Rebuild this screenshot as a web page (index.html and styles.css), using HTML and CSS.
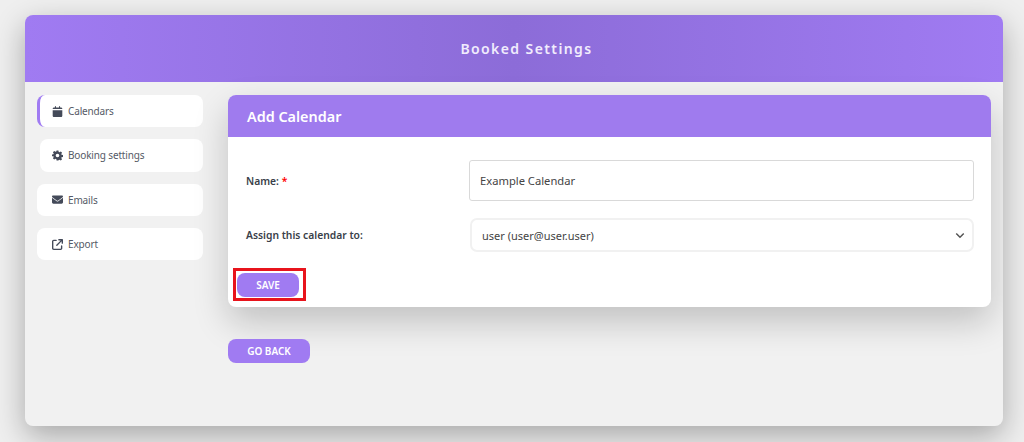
FILE: index.html
```html
<!DOCTYPE html>
<html lang="en">
<head>
<meta charset="UTF-8">
<title>Booked Settings</title>
<link rel="stylesheet" href="styles.css">
</head>
<body>

<div class="window">
  <div class="top-bar">Booked Settings</div>
  <div class="panel">
    <div class="side-nav">
      <a class="nav-item active">
        <svg class="nav-icon" viewBox="0 0 448 512"><path d="M152 24c0-13-11-24-24-24s-24 11-24 24v40H64C29 64 0 93 0 128v16h448v-16c0-35-29-64-64-64h-40V24c0-13-11-24-24-24s-24 11-24 24v40H152V24zM448 192H0v256c0 35 29 64 64 64h320c35 0 64-29 64-64V192z"/></svg>
        Calendars
      </a>
      <a class="nav-item inset">
        <svg class="nav-icon" viewBox="0 0 24 24"><path fill-rule="evenodd" d="M10 1h4l.7 3.200 1.700.7 2.800-1.800 2.800 2.800-1.800 2.800.7 1.700 3.100.6v4l-3.100.7-.7 1.700 1.800 2.800-2.800 2.800-2.800-1.800-1.700.7L14 23h-4l-.7-3.200-1.700-.7-2.800 1.800L2 18.100l1.800-2.800-.7-1.700L0 13.900v-4l3.100-.6.7-1.700L2 4.900l2.800-2.800 2.800 1.800 1.700-.7L10 1zm2 7a4 4 0 1 0 0 8 4 4 0 0 0 0-8z"/></svg>
        Booking settings
      </a>
      <a class="nav-item">
        <svg class="nav-icon" viewBox="0 0 512 512"><path d="M48 64C22 64 0 86 0 112c0 15 7 29 19 38l218 163c11 9 27 9 38 0l218-163c12-9 19-23 19-38 0-26-22-48-48-48H48zM0 176v208c0 35 29 64 64 64h384c35 0 64-29 64-64V176L294 339c-23 17-53 17-76 0L0 176z"/></svg>
        Emails
      </a>
      <a class="nav-item">
        <svg class="nav-icon" viewBox="0 0 512 512"><path d="M320 0c-18 0-32 14-32 32s14 32 32 32h83L201 265c-12 13-12 33 0 46s33 12 46 0L448 109v83c0 18 14 32 32 32s32-14 32-32V32c0-18-14-32-32-32H320zM80 32C36 32 0 68 0 112v320c0 44 36 80 80 80h320c44 0 80-36 80-80V320c0-18-14-32-32-32s-32 14-32 32v112c0 9-7 16-16 16H80c-9 0-16-7-16-16V112c0-9 7-16 16-16h112c18 0 32-14 32-32s-14-32-32-32H80z"/></svg>
        Export
      </a>
    </div>

    <div class="content">
      <div class="card">
        <div class="card-head">Add Calendar</div>
        <div class="card-body">
          <div class="form-row name-row">
            <label class="form-label">Name: <span class="required">*</span></label>
            <div class="text-input">Example Calendar</div>
          </div>
          <div class="form-row assign-row">
            <label class="form-label">Assign this calendar to:</label>
            <div class="select-input">
              user (user@user.user)
              <svg class="chevron" viewBox="0 0 12 8"><path d="M1.500 1.500 6 6l4.500-4.500"/></svg>
            </div>
          </div>
          <div class="save-box">
            <button class="btn">SAVE</button>
          </div>
        </div>
      </div>
      <button class="btn back-btn">GO BACK</button>
    </div>
  </div>
</div>

</body>
</html>
```

FILE: styles.css
```css
* {
  box-sizing: border-box;
  font-family: "Noto Sans", sans-serif;
}
html, body {
  height: 100%;
}
body {
  margin: 0;
  padding: 15px 21px 16px 25px;
  background: #efefef;
  overflow: hidden;
}

.window {
  height: 411px;
  border-radius: 8px;
  background: #f1f1f1;
  box-shadow: 0 10px 30px rgba(0,0,0,0.3);
  overflow: hidden;
}
.top-bar {
  height: 67px;
  padding-left: 25px;
  display: flex;
  justify-content: center;
  align-items: center;
  font-size: 14px;
  font-weight: 600;
  letter-spacing: 1.400px;
  color: #f1ecfd;
  background: linear-gradient(90deg, #a07bf2 0%, #8c6cd8 50%, #a07bf2 100%);
}

.panel {
  display: flex;
  padding: 13px 12px 0;
}
.side-nav {
  width: 166px;
  margin-right: 25px;
  flex-shrink: 0;
  display: flex;
  flex-direction: column;
  gap: 12px;
}
.nav-item {
  height: 32.300px;
  display: flex;
  align-items: center;
  padding-left: 15px;
  background: white;
  border-radius: 8px;
  font-size: 10px;
  letter-spacing: -0.150px;
  color: #555a66;
}
.nav-item.active {
  border-left: 3px solid #a07bf2;
  padding-left: 12px;
}
.nav-item.inset {
  margin-left: 3px;
  padding-left: 12px;
}
.nav-icon {
  width: 11px;
  height: 11px;
  margin-right: 5px;
  fill: #444a59;
}

.content {
  flex: 1;
}
.card {
  width: 763px;
  height: 212px;
  background: white;
  border-radius: 8px;
  overflow: hidden;
  box-shadow: 0 15px 35px rgba(0,0,0,0.2);
}
.card-head {
  height: 42px;
  padding-left: 19px;
  display: flex;
  align-items: center;
  font-size: 14.400px;
  font-weight: 600;
  color: white;
  background: #9f7bee;
}
.card-body {
  padding: 23px 17px 0 18px;
}
.form-row {
  display: flex;
  align-items: center;
}
.form-label {
  width: 223px;
  flex-shrink: 0;
  font-size: 10.300px;
  font-weight: 600;
  color: #3a3f4a;
}
.required {
  color: red;
}
.text-input {
  flex: 1;
  height: 41px;
  display: flex;
  align-items: center;
  padding-left: 10px;
  border: 1px solid #d9d9d9;
  border-radius: 3px;
  font-size: 11.200px;
  color: #444;
}
.assign-row {
  margin-top: 17px;
}
.select-input {
  flex: 1;
  height: 34px;
  margin-left: 1px;
  display: flex;
  align-items: center;
  justify-content: space-between;
  padding: 0 7px 0 10px;
  border: 2px solid #f1f1f1;
  border-radius: 7px;
  font-size: 11px;
  color: #444;
}
.chevron {
  width: 10px;
  height: 7px;
  fill: none;
  stroke: #555;
  stroke-width: 1.800;
}
.save-box {
  width: 73px;
  height: 33px;
  margin: 16px 0 0 -13px;
  padding: 2px 0 0 1px;
  border: 3px solid #e8141c;
}

.btn {
  height: 24px;
  padding: 0;
  border: none;
  border-radius: 8px;
  background: #a07bf2;
  color: white;
  font-size: 10px;
  font-weight: 600;
}
.save-box .btn {
  width: 62px;
  display: block;
}
.back-btn {
  width: 82px;
  margin-top: 32px;
  display: block;
}
```
